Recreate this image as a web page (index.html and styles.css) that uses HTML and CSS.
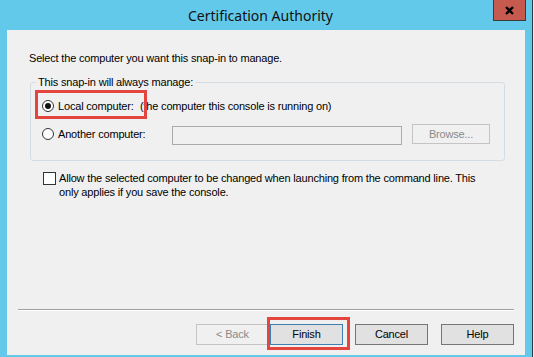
FILE: index.html
```html
<!DOCTYPE html>
<html>
<head>
<meta charset="utf-8">
<link rel="stylesheet" href="styles.css">
</head>
<body>
<div class="window">
  <div class="titlebar">
    <div class="title">Certification Authority</div>
    <div class="close">
      <svg width="9" height="9" viewBox="0 0 9 9"><path d="M1 1 L8 8 M8 1 L1 8" stroke="#000" stroke-width="2.4" fill="none"/></svg>
    </div>
  </div>
  <div class="panel">
    <p class="intro">Select the computer you want this snap-in to manage.</p>
    <fieldset class="group">
      <legend>This snap-in will always manage:</legend>
      <div class="row row-local">
        <span class="radio checked"></span>
        <span class="lbl lbl-local">Local computer:</span>
        <span class="lbl">(the computer this console is running on)</span>
        <span class="mark mark-local"></span>
      </div>
      <div class="row">
        <span class="radio"></span>
        <span class="lbl lbl-other">Another computer:</span>
        <span class="field"></span>
        <span class="btn btn-browse disabled">Browse...</span>
      </div>
    </fieldset>
    <div class="check-row">
      <span class="checkbox"></span>
      <span class="check-text">Allow the selected computer to be changed when launching from the command line. This only applies if you save the console.</span>
    </div>
    <div class="footer">
      <div class="sep"></div>
      <div class="buttons">
        <span class="btn disabled">&lt; Back</span>
        <span class="btn default">Finish<span class="mark mark-finish"></span></span>
        <span class="btn gap">Cancel</span>
        <span class="btn gap2">Help</span>
      </div>
    </div>
  </div>
</div>
</body>
</html>
```

FILE: styles.css
```css
* { box-sizing: border-box; }
html, body { margin: 0; padding: 0; }
body {
  width: 534px;
  height: 357px;
  background: #e8eaec;
  overflow: hidden;
  font-family: "Liberation Sans", Arial, sans-serif;
  font-size: 11px;
  letter-spacing: -0.18px;
  color: #000;
}
.window {
  width: 533px;
  height: 357px;
  background: #63c9ea;
  border-right: 1px solid #2e3a40;
  padding: 0 7px 2px 7px;
  display: flex;
  flex-direction: column;
}
.titlebar {
  height: 30px;
  display: flex;
  align-items: flex-start;
  margin: 0 -7px;
}
.title {
  flex: 1;
  text-align: center;
  padding-left: 28px;
  padding-top: 6px;
  font-family: "Noto Sans", "Open Sans", sans-serif;
  font-size: 14px;
  letter-spacing: 0;
  line-height: 20px;
  color: #111;
}
.close {
  width: 33px;
  height: 21px;
  margin-right: 6px;
  background: #c65a4f;
  border: 1px solid #3c3c3c;
  border-top: none;
  display: flex;
  align-items: center;
  justify-content: center;
}
.panel {
  flex: 1;
  background: #f0f0f0;
  display: flex;
  flex-direction: column;
  padding: 22px 0 0 0;
}
.intro {
  margin: 0 0 0 22px;
  line-height: 13px;
}
.group {
  margin: 11px 0 0 23px;
  width: 475px;
  border: 1px solid #d3dde3;
  border-radius: 3px;
  padding: 7px 0 16px 11px;
}
.group legend {
  padding: 0 2px;
  margin-left: -6px;
  line-height: 13px;
}
.row {
  position: relative;
  display: flex;
  align-items: center;
  height: 20px;
}
.row + .row { margin-top: 8px; }
.radio {
  width: 12px;
  height: 12px;
  border: 1px solid #333;
  border-radius: 50%;
  background: #fff;
  margin-right: 4px;
  display: flex;
  align-items: center;
  justify-content: center;
  flex: none;
}
.radio.checked::after {
  content: "";
  width: 6px;
  height: 6px;
  border-radius: 50%;
  background: #111;
}
.lbl { white-space: nowrap; }
.lbl-local { width: 82px; }
.lbl-other { width: 114px; }
.field {
  width: 230px;
  height: 19px;
  border: 1px solid #aaa;
  background: #f0f0f0;
  margin-top: 2px;
}
.mark {
  position: absolute;
  border: 3px solid #e5453f;
  pointer-events: none;
}
.mark-local {
  left: -7px;
  top: -6px;
  width: 112px;
  height: 29px;
}
.check-row {
  display: flex;
  align-items: flex-start;
  margin: 10px 0 0 36px;
}
.checkbox {
  width: 13px;
  height: 13px;
  border: 1px solid #333;
  background: #fff;
  margin: 1px 3px 0 0;
  flex: none;
}
.check-text {
  width: 430px;
  line-height: 14px;
}
.footer {
  margin-top: auto;
  padding: 0 11px 10px 11px;
}
.sep {
  border-top: 1px solid #a0a0a0;
  border-bottom: 1px solid #fff;
  margin-bottom: 13px;
}
.buttons {
  display: flex;
  justify-content: flex-end;
}
.btn {
  position: relative;
  width: 73px;
  height: 21px;
  border: 1px solid #767676;
  background: #e1e1e1;
  display: flex;
  align-items: center;
  justify-content: center;
  line-height: 13px;
}
.btn.disabled {
  border-color: #c4c4c4;
  background: #f0f0f0;
  color: #8a8a8a;
}
.btn.default {
  border-color: #3c7fb1;
  margin-left: 1px;
}
.btn.gap { margin-left: 12px; }
.btn.gap2 { margin-left: 13px; }
.btn-browse {
  width: 78px;
  height: 20px;
  margin-left: 10px;
}
.mark-finish {
  left: -4px;
  top: -8px;
  width: 83px;
  height: 33px;
}
```
